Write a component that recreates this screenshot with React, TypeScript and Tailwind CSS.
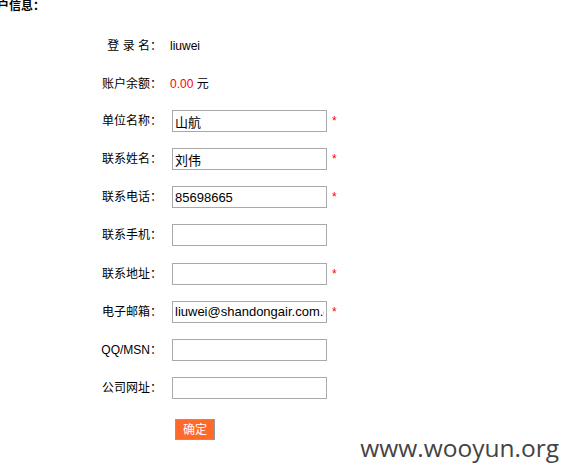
const rows = [
  { label: '单位名称：', value: '山航', required: true },
  { label: '联系姓名：', value: '刘伟', required: true },
  { label: '联系电话：', value: '85698665', required: true },
  { label: '联系手机：', value: '', required: false },
  { label: '联系地址：', value: '', required: true },
  { label: '电子邮箱：', value: 'liuwei@shandongair.com.cn', required: true },
  { label: 'QQ/MSN：', value: '', required: false },
  { label: '公司网址：', value: '', required: false },
];

export default function App() {
  return (
    <div className="relative w-[568px] h-[475px] overflow-hidden bg-white text-[12px] text-black font-['Liberation_Sans','Noto_Sans_CJK_SC',sans-serif]">
      <div className="ml-[-15px] mt-[-1px] leading-[14px] font-bold">用户信息：</div>

      <div className="mt-[13px]">
        <div className="flex items-center h-[39px]">
          <div className="w-[162px] text-right">登 录 名：</div>
          <div className="ml-[8px]">liuwei</div>
        </div>
        <div className="flex items-center h-[37px]">
          <div className="w-[162px] text-right">账户余额：</div>
          <div className="ml-[8px]">
            <span className="text-[#ff0000]">0.00</span> 元
          </div>
        </div>

        {rows.map((r) => (
          <div key={r.label} className="flex items-center h-[38.15px]">
            <div className="w-[162px] text-right">{r.label}</div>
            <input
              readOnly
              defaultValue={r.value}
              className="ml-[10px] w-[155px] h-[22px] border border-[#a9a9a9] px-[2px] text-[13px] text-black outline-none bg-white font-['Liberation_Sans','Noto_Sans_CJK_SC',sans-serif]"
            />
            {r.required && <span className="ml-[5px] text-[#ff0000]">*</span>}
          </div>
        ))}
      </div>

      <button className="ml-[175px] mt-[12px] w-[40px] h-[21px] bg-[#ff6a2b] border border-[#8f9aa5] text-white text-[12px] leading-none">
        确定
      </button>

      <div className="absolute right-[9px] bottom-[15px] text-[24.5px] leading-none text-[#444] font-['Open_Sans',sans-serif]">
        www.wooyun.org
      </div>
    </div>
  );
}
